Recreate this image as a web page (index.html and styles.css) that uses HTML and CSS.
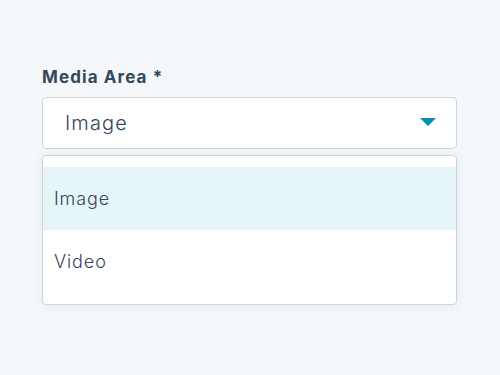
FILE: index.html
```html
<!DOCTYPE html>
<html>
<head>
<meta charset="utf-8">
<link rel="stylesheet" href="styles.css">
</head>
<body>
<div class="field">
  <label class="label">Media Area *</label>
  <div class="select">
    <span class="value">Image</span>
    <svg class="caret" width="16" height="8" viewBox="0 0 16 8"><path d="M0 0 L16 0 L8 8 Z" fill="#0091ae"/></svg>
  </div>
  <div class="menu">
    <div class="option active">Image</div>
    <div class="option">Video</div>
  </div>
</div>
</body>
</html>
```
FILE: styles.css
```css
html, body { margin: 0; padding: 0; }
body {
  width: 500px; height: 375px;
  background: #f5f8fa;
  font-family: Inter, "Noto Sans", sans-serif;
  color: #33475b;
}
.field { padding: 66px 43px 0 42px; display: flex; flex-direction: column; }
.label { font-weight: 700; font-size: 17px; line-height: 23px; letter-spacing: 1.1px; }
.select {
  margin-top: 8px;
  height: 50px;
  border: 1px solid #cbd6e2;
  border-radius: 4px;
  background: #fff;
  display: flex; align-items: center; justify-content: space-between;
  padding: 0 20px 0 22px;
}
.value { font-size: 20px; letter-spacing: 1.1px; font-weight: 300; }
.caret { display: block; margin-top: -2px; }
.menu {
  margin-top: 6px;
  border: 1px solid #cbd6e2;
  border-radius: 4px;
  background: #fff;
  padding: 11px 0;
  box-shadow: 0 1px 12px rgba(45,62,80,0.08);
}
.option { height: 63px; display: flex; align-items: center; padding-left: 11px; font-size: 18px; letter-spacing: 0.9px; font-weight: 300; }
.option.active { background: #e5f5f8; }
```
